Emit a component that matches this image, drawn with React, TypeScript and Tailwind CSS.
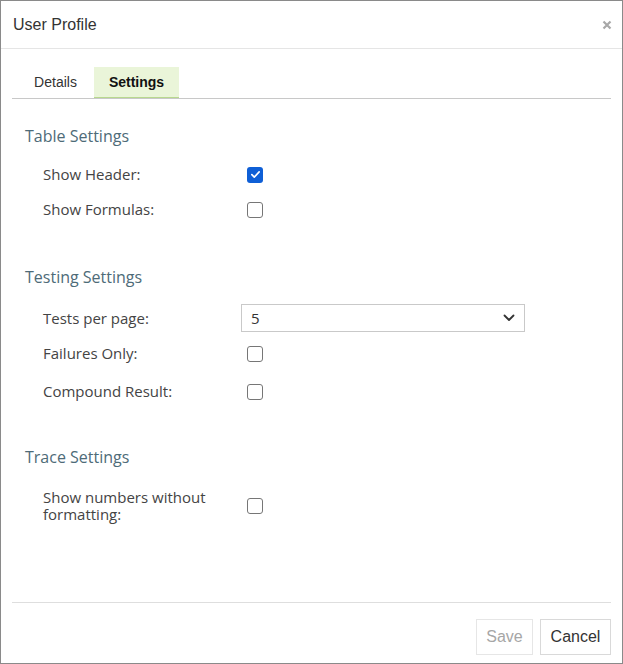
import { useState } from "react";

function Check({ checked }: { checked?: boolean }) {
  if (checked) {
    return (
      <span className="flex h-[16px] w-[16px] items-center justify-center rounded-[3px] bg-[#0f5fd6]">
        <svg viewBox="0 0 16 16" className="h-[13px] w-[13px]">
          <path d="M3.5 8.2l3 3 6-6.4" fill="none" stroke="#fff" strokeWidth="2" strokeLinecap="round" strokeLinejoin="round" />
        </svg>
      </span>
    );
  }
  return <span className="block h-[16px] w-[16px] rounded-[3px] border-[1.5px] border-[#767676] bg-white" />;
}

function Row({ label, children, className = "" }: { label: React.ReactNode; children: React.ReactNode; className?: string }) {
  return (
    <div className={`flex items-center ${className}`}>
      <div className="w-[240px] pl-[42px] leading-[17px]">{label}</div>
      {children}
    </div>
  );
}

function Section({ title }: { title: string }) {
  return <h2 className="pl-[24px] text-[16px] leading-[20px] text-[#4e6b78]">{title}</h2>;
}

export default function App() {
  const [tab] = useState("settings");
  return (
    <div className="flex h-[664px] w-[623px] flex-col border border-[#8a8a8a] bg-white text-[#333]">
      <header className="flex h-[48px] items-center justify-between border-b border-[#e5e5e5] pl-[12px] pr-[10px] font-['Liberation_Sans',Arial,sans-serif]">
        <h1 className="text-[16px] text-[#333]">User Profile</h1>
        <svg viewBox="0 0 10 10" className="h-[10px] w-[10px]">
          <path d="M1.5 1.5l7 7M8.5 1.5l-7 7" stroke="#a8a8a8" strokeWidth="2.2" />
        </svg>
      </header>

      <div className="mx-[11px] mt-[18px] flex h-[32px] border-b border-[#c8c8c8] font-['Liberation_Sans',Arial,sans-serif] text-[14px]">
        <div className="flex w-[82px] items-center justify-center pl-[5px] text-[#333]">Details</div>
        <div className={`flex w-[85px] items-center justify-center border-b border-[#b8d88f] bg-[#eaf5d9] font-bold text-[#111] ${tab === "settings" ? "" : ""}`}>
          Settings
        </div>
      </div>

      <div className="flex-1 font-['Open_Sans',sans-serif] text-[15px] text-[#444]">
        <div className="mt-[27px]">
          <Section title="Table Settings" />
        </div>
        <Row label="Show Header:" className="mt-[20px] h-[17px]">
          <div className="pl-[6px]"><Check checked /></div>
        </Row>
        <Row label="Show Formulas:" className="mt-[18px] h-[17px]">
          <div className="pl-[6px]"><Check /></div>
        </Row>

        <div className="mt-[49px]">
          <Section title="Testing Settings" />
        </div>
        <Row label="Tests per page:" className="mt-[17px] h-[28px]">
          <div className="flex h-[28px] w-[284px] items-center justify-between border border-[#c9c9c9] px-[9px] text-[#333]">
            <span>5</span>
            <svg viewBox="0 0 12 8" className="h-[8px] w-[12px]">
              <path d="M1.5 1.5L6 6l4.5-4.5" fill="none" stroke="#333" strokeWidth="1.8" strokeLinecap="round" strokeLinejoin="round" />
            </svg>
          </div>
        </Row>
        <Row label="Failures Only:" className="mt-[13px] h-[17px]">
          <div className="pl-[6px]"><Check /></div>
        </Row>
        <Row label="Compound Result:" className="mt-[21px] h-[17px]">
          <div className="pl-[6px]"><Check /></div>
        </Row>

        <div className="mt-[47px]">
          <Section title="Trace Settings" />
        </div>
        <Row label={<>Show numbers without<br />formatting:</>} className="mt-[22px]">
          <div className="pl-[6px]"><Check /></div>
        </Row>
      </div>

      <footer className="mx-[11px] flex h-[61px] items-start justify-end gap-[7px] border-t border-[#dedede] pt-[16px] font-['Liberation_Sans',Arial,sans-serif] text-[16px]">
        <button className="h-[36px] w-[57px] border border-[#e6e6e6] bg-white text-[#a6a6a6]">Save</button>
        <button className="h-[36px] w-[71px] border border-[#d9d9d9] bg-white text-[#333]">Cancel</button>
      </footer>
    </div>
  );
}
